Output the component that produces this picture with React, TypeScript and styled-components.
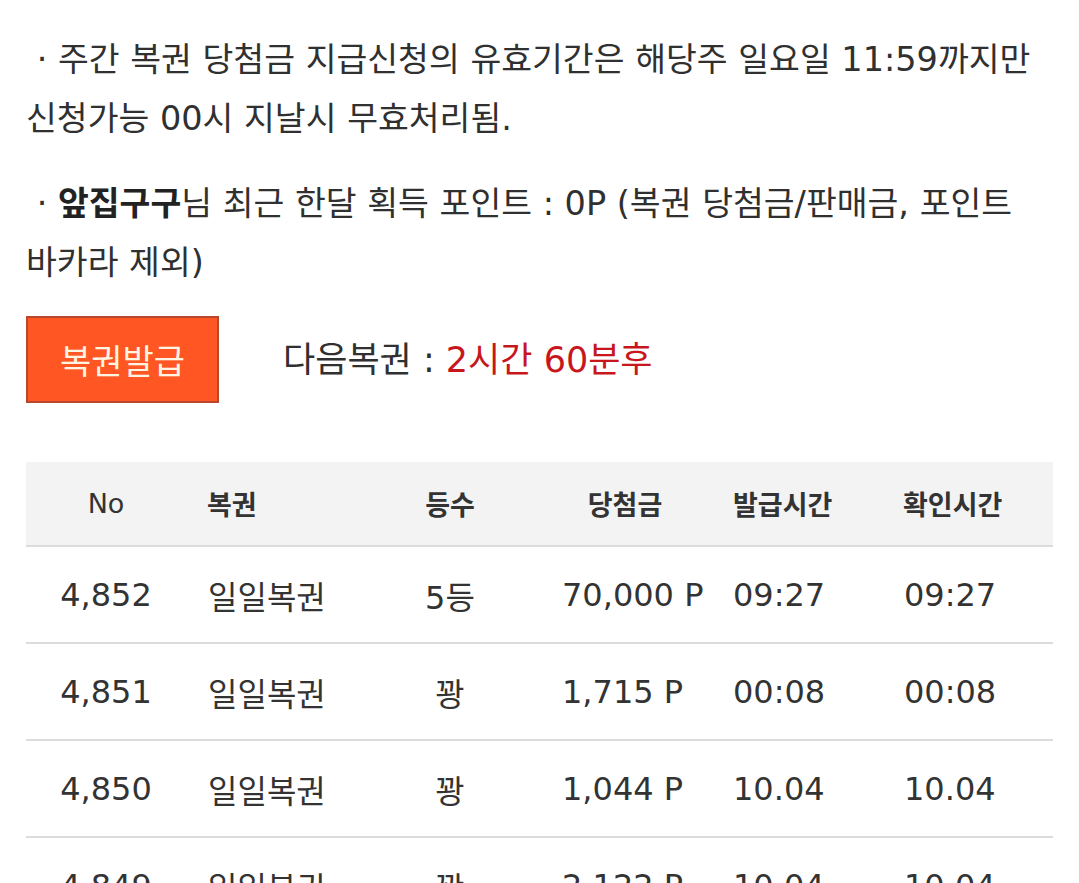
import React from "react";
import styled, { createGlobalStyle } from "styled-components";

const GlobalStyle = createGlobalStyle`
  html, body {
    margin: 0;
    padding: 0;
    background: #ffffff;
  }
  body {
    font-family: "DejaVu Sans", "Noto Sans CJK KR", sans-serif;
    color: #333333;
  }
`;

const Page = styled.div`
  padding: 30px 26px 0 26px;
  display: flex;
  flex-direction: column;
`;

const Notice = styled.p`
  margin: 0 0 26px 0;
  padding-left: 0;
  font-size: 33.5px;
  line-height: 59px;
  color: #303030;
  word-break: keep-all;
`;

const Strong = styled.b`
  font-weight: 700;
  color: #222222;
`;

const IssueRow = styled.div`
  display: flex;
  align-items: center;
  gap: 64px;
  margin-top: -2px;
`;

const IssueButton = styled.button`
  width: 193px;
  height: 87px;
  box-sizing: border-box;
  background: #ff5623;
  border: 2px solid #b8482c;
  color: #fff3e2;
  font-family: "Noto Sans CJK KR", sans-serif;
  font-size: 34px;
  padding: 0;
  cursor: pointer;
`;

const NextLabel = styled.div`
  font-size: 35px;
  color: #303030;
  line-height: 40px;
`;

const Red = styled.span`
  color: #c8161d;
`;

const Table = styled.div`
  margin-top: 59px;
  display: grid;
  grid-template-columns: 160px 184px 160px 190px 170px 1fr;
`;

const HeadCell = styled.div<{ $align: string; $pad: number; $bold: boolean }>`
  height: 83px;
  background: #f3f3f3;
  border-bottom: 2px solid #dcdcdc;
  display: flex;
  align-items: center;
  justify-content: ${(p) => p.$align};
  padding-left: ${(p) => p.$pad}px;
  font-size: 27px;
  font-weight: ${(p) => (p.$bold ? 700 : 400)};
  color: #333333;
  font-family: ${(p) => (p.$bold ? `"Noto Sans CJK KR", sans-serif` : `"DejaVu Sans", "Noto Sans CJK KR", sans-serif`)};
`;

const BodyCell = styled.div<{ $align: string; $pad: number }>`
  height: 95px;
  border-bottom: 2px solid #dcdcdc;
  display: flex;
  align-items: center;
  justify-content: ${(p) => p.$align};
  padding-left: ${(p) => p.$pad}px;
  font-size: 32px;
  color: #333333;
  white-space: nowrap;
`;

type Col = { head: string; bold: boolean; headAlign: string; headPad: number; align: string; pad: number };

const columns: Col[] = [
  { head: "No", bold: false, headAlign: "center", headPad: 0, align: "center", pad: 0 },
  { head: "복권", bold: true, headAlign: "flex-start", headPad: 21, align: "flex-start", pad: 22 },
  { head: "등수", bold: true, headAlign: "center", headPad: 0, align: "center", pad: 0 },
  { head: "당첨금", bold: true, headAlign: "center", headPad: 0, align: "flex-start", pad: 32 },
  { head: "발급시간", bold: true, headAlign: "flex-start", headPad: 13, align: "flex-start", pad: 13 },
  { head: "확인시간", bold: true, headAlign: "flex-start", headPad: 13, align: "flex-start", pad: 14 },
];

const rows: string[][] = [
  ["4,852", "일일복권", "5등", "70,000 P", "09:27", "09:27"],
  ["4,851", "일일복권", "꽝", "1,715 P", "00:08", "00:08"],
  ["4,850", "일일복권", "꽝", "1,044 P", "10.04", "10.04"],
  ["4,849", "일일복권", "꽝", "2,122 P", "10.04", "10.04"],
];

export default function App() {
  return (
    <>
      <GlobalStyle />
      <Page>
        <Notice>
          &nbsp;· 주간 복권 당첨금 지급신청의 유효기간은 해당주 일요일 11:59까지만 신청가능 00시 지날시 무효처리됨.
        </Notice>
        <Notice>
          &nbsp;· <Strong>앞집구구</Strong>님 최근 한달 획득 포인트 : 0P (복권 당첨금/판매금, 포인트 바카라 제외)
        </Notice>
        <IssueRow>
          <IssueButton>복권발급</IssueButton>
          <NextLabel>
            다음복권 : <Red>2시간 60분후</Red>
          </NextLabel>
        </IssueRow>
        <Table>
          {columns.map((c) => (
            <HeadCell key={c.head} $align={c.headAlign} $pad={c.headPad} $bold={c.bold}>
              {c.head}
            </HeadCell>
          ))}
          {rows.map((r) =>
            r.map((v, i) => (
              <BodyCell key={r[0] + i} $align={columns[i].align} $pad={columns[i].pad}>
                {v}
              </BodyCell>
            ))
          )}
        </Table>
      </Page>
    </>
  );
}
